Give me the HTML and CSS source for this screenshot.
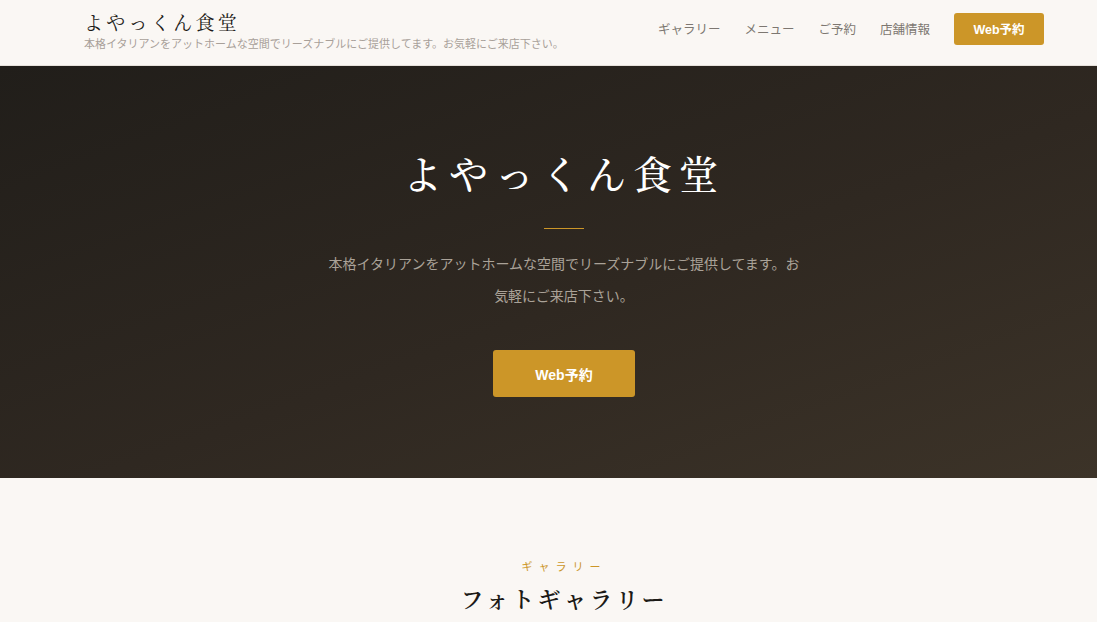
FILE: index.html
```html
<!DOCTYPE html>
<html lang="ja">
<head>
  <meta charset="utf-8">
  <meta name="viewport" content="width=device-width, initial-scale=1.0">
  <title>よやっくん食堂</title>
  <link rel="stylesheet" href="styles.css">
</head>
<body>
<header class="site-header">
  <div class="wrap header-inner">
    <div class="brand">
      <div class="brand-name">よやっくん食堂</div>
      <div class="brand-tag">本格イタリアンをアットホームな空間でリーズナブルにご提供してます。お気軽にご来店下さい。</div>
    </div>
    <nav class="nav">
      <a href="#gallery">ギャラリー</a>
      <a href="#menu">メニュー</a>
      <a href="#reserve">ご予約</a>
      <a href="#shop">店舗情報</a>
      <a class="btn btn-sm" href="#reserve">Web予約</a>
    </nav>
  </div>
</header>
<main>
  <section class="hero">
    <div class="wrap hero-inner">
      <h1 class="hero-title">よやっくん食堂</h1>
      <div class="hero-rule"></div>
      <p class="hero-text">本格イタリアンをアットホームな空間でリーズナブルにご提供してます。お気軽にご来店下さい。</p>
      <a class="btn btn-lg" href="#reserve">Web予約</a>
    </div>
  </section>
  <section class="gallery" id="gallery">
    <div class="wrap">
      <div class="section-label">ギャラリー</div>
      <h2 class="section-title">フォトギャラリー</h2>
    </div>
  </section>
</main>
</body>
</html>
```
FILE: styles.css
```css
body { margin: 0; background: #faf7f4; color: #222; font-family: "Noto Sans CJK JP", "Liberation Sans", sans-serif; }
a { text-decoration: none; }
.wrap { max-width: 960px; margin-left: 84px; }

.site-header { background: #faf7f4; border-bottom: 1px solid #e6e1db; }
.header-inner { height: 65px; display: flex; align-items: center; justify-content: space-between; }
.brand-name { font-family: "Noto Serif CJK JP", "Liberation Serif", serif; font-size: 19px; letter-spacing: 3.3px; line-height: 22px; color: #1c1a17; margin-top: -4px; }
.brand-tag { font-size: 11px; color: #a8a099; margin-top: 3px; line-height: 14px; }
.nav { display: flex; align-items: center; gap: 24px; margin-top: -8px; }
.nav a { font-size: 12.5px; color: #7d7771; }
.btn { display: inline-flex; align-items: center; justify-content: center; background: #cc9628; color: #fff; font-weight: bold; border-radius: 3px; font-family: "Liberation Sans", "Noto Sans CJK JP", sans-serif; }
.nav a.btn { color: #fff; }
.btn-sm { width: 90px; height: 32px; font-size: 12px; }
.btn-lg { width: 142px; height: 47px; font-size: 14px; }

.hero { height: 412px; background: linear-gradient(160deg, #211e1a 0%, #2f2821 55%, #3c3328 100%); }
.hero-inner { display: flex; flex-direction: column; align-items: center; text-align: center; padding-top: 80px; }
.hero-title { margin: 0; font-family: "Noto Serif CJK JP", "Liberation Serif", serif; font-weight: 500; font-size: 39px; letter-spacing: 7px; color: #fff; line-height: 52px; }
.hero-rule { width: 40px; height: 1px; background: #cc9628; margin-top: 30px; }
.hero-text { max-width: 480px; margin: 18px 0 0; font-size: 14px; line-height: 32px; color: #aaa298; }
.hero .btn-lg { margin-top: 39px; }

.gallery { padding-top: 80px; text-align: center; }
.section-label { font-size: 11px; letter-spacing: 6px; color: #cc9628; line-height: 16px; }
.section-title { margin: 8px 0 0; font-family: "Noto Serif CJK JP", "Liberation Serif", serif; font-weight: 600; font-size: 23px; letter-spacing: 3px; color: #1c1a17; }
```
